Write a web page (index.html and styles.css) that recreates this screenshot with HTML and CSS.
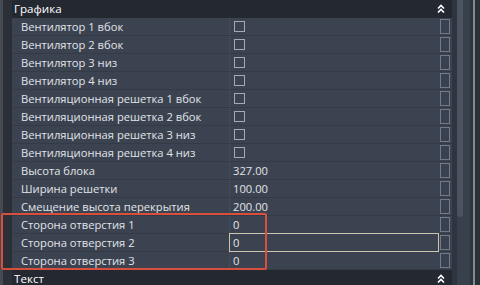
FILE: index.html
```html
<!DOCTYPE html>
<html>
<head>
<meta charset="utf-8">
<link rel="stylesheet" href="styles.css">
</head>
<body>
<div class="app">
  <div class="gutter"><div class="edge"></div></div>
  <div class="panel">
    <div class="section">
      <span class="title">Графика</span>
      <svg class="chev" width="8" height="9" viewBox="0 0 8 9"><polyline points="1,4.5 4,1.5 7,4.5" fill="none" stroke="#fff" stroke-width="1.6"/><polyline points="1,8.5 4,5.5 7,8.5" fill="none" stroke="#fff" stroke-width="1.6"/></svg>
    </div>
    <div class="row"><div class="label">Вентилятор 1 вбок</div><div class="value"><span class="check"></span></div><div class="side"><span class="box"></span></div></div>
    <div class="row"><div class="label">Вентилятор 2 вбок</div><div class="value"><span class="check"></span></div><div class="side"><span class="box"></span></div></div>
    <div class="row"><div class="label">Вентилятор 3 низ</div><div class="value"><span class="check"></span></div><div class="side"><span class="box"></span></div></div>
    <div class="row"><div class="label">Вентилятор 4 низ</div><div class="value"><span class="check"></span></div><div class="side"><span class="box"></span></div></div>
    <div class="row"><div class="label">Вентиляционная решетка 1 вбок</div><div class="value"><span class="check"></span></div><div class="side"><span class="box"></span></div></div>
    <div class="row"><div class="label">Вентиляционная решетка 2 вбок</div><div class="value"><span class="check"></span></div><div class="side"><span class="box"></span></div></div>
    <div class="row"><div class="label">Вентиляционная решетка 3 низ</div><div class="value"><span class="check"></span></div><div class="side"><span class="box"></span></div></div>
    <div class="row"><div class="label">Вентиляционная решетка 4 низ</div><div class="value"><span class="check"></span></div><div class="side"><span class="box"></span></div></div>
    <div class="row"><div class="label">Высота блока</div><div class="value"><span class="num">327.00</span></div><div class="side"><span class="box"></span></div></div>
    <div class="row"><div class="label">Ширина решетки</div><div class="value"><span class="num">100.00</span></div><div class="side"><span class="box"></span></div></div>
    <div class="row"><div class="label">Смещение высота перекрытия</div><div class="value"><span class="num">200.00</span></div><div class="side"><span class="box"></span></div></div>
    <div class="row"><div class="label">Сторона отверстия 1</div><div class="value"><span class="num">0</span></div><div class="side"><span class="box"></span></div></div>
    <div class="row"><div class="label">Сторона отверстия 2</div><div class="value"><span class="editor"><span class="num">0</span></span></div><div class="side"><span class="box"></span></div></div>
    <div class="row"><div class="label">Сторона отверстия 3</div><div class="value"><span class="num">0</span></div><div class="side"><span class="box"></span></div></div>
    <div class="section">
      <span class="title">Текст</span>
      <svg class="chev" width="8" height="9" viewBox="0 0 8 9"><polyline points="1,4.5 4,1.5 7,4.5" fill="none" stroke="#fff" stroke-width="1.6"/><polyline points="1,8.5 4,5.5 7,8.5" fill="none" stroke="#fff" stroke-width="1.6"/></svg>
    </div>
  </div>
  <div class="scroll">
    <div class="s1"></div>
    <div class="s2"><div class="thumb"></div></div>
    <div class="s3"></div>
    <div class="s4"></div>
    <div class="s5"></div>
  </div>
  <div class="highlight"></div>
</div>
</body>
</html>
```
FILE: styles.css
```css
html, body {
  margin: 0;
  padding: 0;
  background: #2b3038;
}
.app {
  position: relative;
  width: 480px;
  height: 285px;
  overflow: hidden;
  display: flex;
  font-family: "Open Sans", "Noto Sans", sans-serif;
  font-size: 11.2px;
}
.gutter {
  width: 12px;
  display: flex;
  background: #2b3038;
}
.edge {
  width: 3px;
  background: #454a52;
}
.panel {
  width: 440px;
  display: flex;
  flex-direction: column;
}
.section {
  height: 18px;
  flex: none;
  background: #232831;
  display: flex;
  align-items: center;
  justify-content: space-between;
  padding: 0 7px 0 2px;
  color: #ffffff;
  font-size: 11.6px;
}
.section .title {
  line-height: 16px;
}
.chev {
  display: block;
  margin-top: -1px;
}
.row {
  height: 17px;
  flex: none;
  border-bottom: 1px solid #343b47;
  background: #3b4351;
  display: flex;
  color: #e2e4e8;
}
.label {
  width: 217px;
  padding-left: 9px;
  box-sizing: border-box;
  line-height: 17px;
  white-space: nowrap;
}
.value {
  position: relative;
  width: 210px;
  display: flex;
  align-items: center;
  padding-left: 3px;
  box-sizing: border-box;
  border-left: 1px dotted #4e5665;
}
.num {
  line-height: 17px;
}
.check {
  width: 9px;
  height: 9px;
  border: 1px solid #a3aab5;
  margin-left: 1px;
}
.editor {
  position: absolute;
  left: -1px;
  right: 0;
  top: -1px;
  bottom: -1px;
  border: 1px solid #cdc5ad;
  display: flex;
  align-items: center;
  padding-left: 3px;
}
.side {
  width: 13px;
  display: flex;
  align-items: flex-start;
  padding-left: 1px;
  box-sizing: border-box;
}
.box {
  margin-top: 1px;
  width: 8px;
  height: 13px;
  border: 1px solid #727b89;
  background: #394150;
}
.scroll {
  width: 28px;
  display: flex;
}
.s1 { width: 5px; background: #2f3540; }
.s2 { width: 13px; background: #38404b; }
.thumb {
  width: 6px;
  height: 217px;
  background: #4b535f;
  border-radius: 0 0 3px 3px;
}
.s3 { width: 3px; background: #2e343d; }
.s4 { width: 2px; background: #878c93; }
.s5 { width: 5px; background: #2c3037; }
.highlight {
  position: absolute;
  left: 1px;
  top: 213px;
  width: 262px;
  height: 53px;
  border: 2px solid #d84f3e;
  border-radius: 2px;
}
```
